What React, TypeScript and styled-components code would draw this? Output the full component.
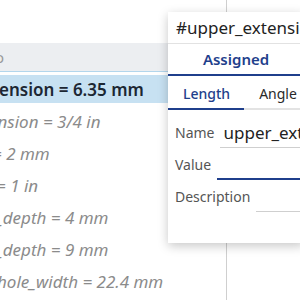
import React from "react";
import styled, { createGlobalStyle } from "styled-components";

const Global = createGlobalStyle`
  html, body { margin: 0; padding: 0; background: #fff; }
  body { font-family: "Noto Sans", "Open Sans", sans-serif; overflow: hidden; }
  #root { width: 300px; height: 300px; }
`;

const Page = styled.div`
  position: relative;
  width: 300px;
  height: 300px;
  overflow: hidden;
  display: grid;
  grid-template-columns: 226px 1px 1fr;
`;

const List = styled.div`
  display: flex;
  flex-direction: column;
  padding-top: 43px;
  overflow: hidden;
`;

const Header = styled.div`
  height: 28px;
  background: #eceef1;
  border-bottom: 1px solid #b3d6ec;
  display: flex;
  align-items: center;
  color: #9a9a9a;
  font-size: 15px;
  overflow: hidden;
`;

const HeaderGlyph = styled.span`
  margin-left: -5px;
`;

const Row = styled.div<{ $selected?: boolean }>`
  height: ${(p) => (p.$selected ? "28px" : "32px")};
  margin-top: ${(p) => (p.$selected ? "3px" : "0")};
  margin-bottom: ${(p) => (p.$selected ? "2px" : "0")};
  background: ${(p) => (p.$selected ? "#c7e1f2" : "transparent")};
  display: flex;
  align-items: center;
  white-space: nowrap;
  overflow: hidden;
  font-size: 17px;
  font-style: ${(p) => (p.$selected ? "normal" : "italic")};
  font-weight: ${(p) => (p.$selected ? 600 : 400)};
  color: ${(p) => (p.$selected ? "#1c2733" : "#8b8b8b")};
`;

const RowText = styled.span<{ $shift: number }>`
  margin-left: ${(p) => p.$shift}px;
`;

const Divider = styled.div`
  background: #cfcfcf;
`;

const Popup = styled.div`
  position: absolute;
  left: 168px;
  top: 12px;
  width: 136px;
  height: 231px;
  background: #fff;
  box-shadow: 0 3px 10px rgba(0, 0, 0, 0.22);
  display: flex;
  flex-direction: column;
  overflow: hidden;
`;

const Title = styled.div`
  height: 31px;
  border-bottom: 1px solid #e2e2e2;
  display: flex;
  align-items: center;
  padding-left: 8px;
  font-size: 17px;
  color: #222;
  white-space: nowrap;
`;

const TopTab = styled.div`
  height: 30px;
  border-bottom: 2px solid #1f3f8c;
  display: flex;
  align-items: center;
  justify-content: center;
  font-size: 15px;
  font-weight: 600;
  color: #1f3f8c;
`;

const TabBar = styled.div`
  height: 32px;
  border-bottom: 2px solid #e3e3e3;
  display: flex;
`;

const Tab = styled.div<{ $active?: boolean }>`
  display: flex;
  align-items: center;
  padding: 2px 14px 0 15px;
  margin-bottom: -2px;
  border-bottom: 2px solid ${(p) => (p.$active ? "#1f3f8c" : "transparent")};
  font-size: 14px;
  font-weight: ${(p) => (p.$active ? 500 : 400)};
  color: ${(p) => (p.$active ? "#1f3f8c" : "#2a2a2a")};
`;

const Form = styled.div`
  display: flex;
  flex-direction: column;
  padding: 10px 0 0 7px;
  gap: 2px;
`;

const Field = styled.div`
  height: 30px;
  display: flex;
  align-items: flex-start;
  white-space: nowrap;
`;

const Label = styled.span`
  font-size: 14px;
  color: #555;
  padding-top: 3px;
  margin-right: 6px;
`;

const Input = styled.div<{ $focused?: boolean }>`
  flex: 1;
  height: ${(p) => (p.$focused ? "26px" : "27px")};
  border-bottom: ${(p) => (p.$focused ? "2px solid #1f3f8c" : "1px solid #cfcfcf")};
  font-size: 17px;
  color: #222;
  padding-left: 3px;
  line-height: 26px;
  overflow: hidden;
`;

const rows = [
  { text: "ension = 3/4 in", shift: -11 },
  { text: "= 2 mm", shift: -8 },
  { text: "= 1 in", shift: -4 },
  { text: "_depth = 4 mm", shift: -4 },
  { text: "_depth = 9 mm", shift: -4 },
  { text: "hole_width = 22.4 mm", shift: -3 },
];

export default function App() {
  return (
    <>
      <Global />
      <Page>
        <List>
          <Header>
            <HeaderGlyph>o</HeaderGlyph>
          </Header>
          <Row $selected>
            <RowText $shift={-1}>ension = 6.35 mm</RowText>
          </Row>
          {rows.map((r) => (
            <Row key={r.text + r.shift}>
              <RowText $shift={r.shift}>{r.text}</RowText>
            </Row>
          ))}
        </List>
        <Divider />
        <div />
        <Popup>
          <Title>#upper_extension</Title>
          <TopTab>Assigned</TopTab>
          <TabBar>
            <Tab $active>Length</Tab>
            <Tab>Angle</Tab>
          </TabBar>
          <Form>
            <Field>
              <Label>Name</Label>
              <Input>upper_extension</Input>
            </Field>
            <Field>
              <Label>Value</Label>
              <Input $focused />
            </Field>
            <Field>
              <Label>Description</Label>
              <Input />
            </Field>
          </Form>
        </Popup>
      </Page>
    </>
  );
}
